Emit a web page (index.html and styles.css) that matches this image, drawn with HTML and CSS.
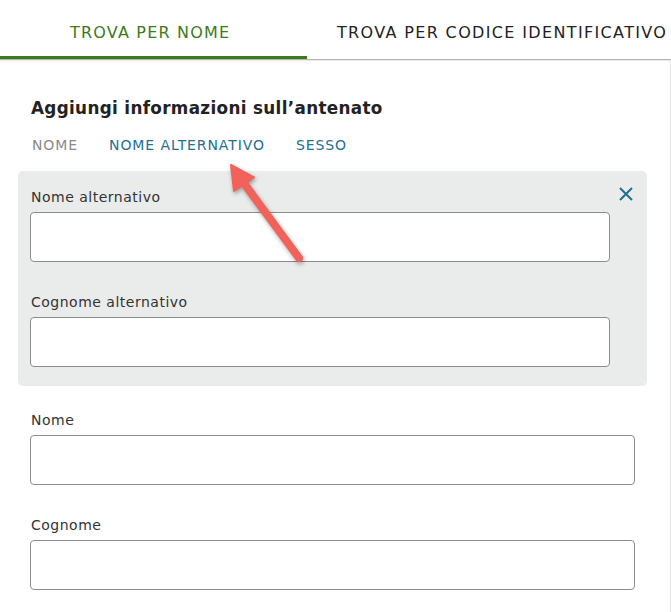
FILE: index.html
```html
<!DOCTYPE html>
<html lang="it">
<head>
<meta charset="utf-8">
<title>Trova antenato</title>
<link rel="stylesheet" href="styles.css">
</head>
<body>
<div class="page">
  <nav class="tabs">
    <div class="tab tab-active">TROVA PER NOME</div>
    <div class="tab tab-second">TROVA PER CODICE IDENTIFICATIVO</div>
  </nav>
  <main class="content">
    <h2 class="heading">Aggiungi informazioni sull’antenato</h2>
    <div class="subtabs">
      <span class="subtab subtab-disabled">NOME</span>
      <span class="subtab">NOME ALTERNATIVO</span>
      <span class="subtab">SESSO</span>
    </div>
    <section class="panel">
      <button class="close" aria-label="Chiudi">
        <svg width="14" height="14" viewBox="0 0 14 14"><path d="M1 1 L13 13 M13 1 L1 13" stroke="#1f6f8f" stroke-width="2" fill="none"/></svg>
      </button>
      <div class="field">
        <label class="label">Nome alternativo</label>
        <div class="input"></div>
      </div>
      <div class="field">
        <label class="label">Cognome alternativo</label>
        <div class="input"></div>
      </div>
    </section>
    <section class="fields">
      <div class="field">
        <label class="label">Nome</label>
        <div class="input"></div>
      </div>
      <div class="field">
        <label class="label">Cognome</label>
        <div class="input"></div>
      </div>
    </section>
  </main>
  <svg class="arrow" width="671" height="612" viewBox="0 0 671 612">
    <line x1="299" y1="258" x2="243" y2="182" stroke="#f0625a" stroke-width="8" stroke-linecap="round"/>
    <polygon points="231,165 254,177.5 234,191" fill="#f0625a" stroke="#f0625a" stroke-width="2" stroke-linejoin="round"/>
  </svg>
</div>
</body>
</html>
```
FILE: styles.css
```css
html, body {
  margin: 0;
  padding: 0;
  background: #fff;
}
body {
  font-family: "DejaVu Sans", Verdana, sans-serif;
  color: #333;
}
.page {
  position: relative;
  width: 671px;
  height: 612px;
  overflow: hidden;
}
.tabs {
  display: flex;
  height: 59px;
  border-bottom: 1px solid #b4b4b4;
  box-shadow: 0 1px 1px rgba(0,0,0,0.08);
  white-space: nowrap;
}
.tab {
  position: relative;
  box-sizing: border-box;
  padding-top: 23px;
  line-height: 20px;
  font-size: 16px;
  letter-spacing: 1.2px;
  color: #222;
}
.tab-active {
  width: 307px;
  padding-left: 70px;
  color: #3d7a1d;
}
.tab-active::after {
  content: "";
  position: absolute;
  left: 0;
  right: 0;
  bottom: 0;
  height: 3px;
  background: #3d7a1d;
}
.tab-second {
  padding-left: 30px;
  letter-spacing: 1.35px;
}
.content {
  box-sizing: border-box;
  width: 671px;
  height: 552px;
  padding: 36px 0 0 18px;
  border-right: 1px solid #e4e4e4;
}
.heading {
  margin: 0;
  padding-left: 13px;
  font-size: 16.8px;
  line-height: 24px;
  letter-spacing: 0.34px;
  font-weight: bold;
  color: #222;
}
.subtabs {
  display: flex;
  gap: 31px;
  margin-top: 15px;
  padding-left: 14px;
  line-height: 20px;
  font-size: 14px;
  letter-spacing: 0.9px;
}
.subtab {
  color: #23708f;
}
.subtab-disabled {
  color: #8a8a8a;
}
.panel {
  position: relative;
  box-sizing: border-box;
  width: 629px;
  margin-top: 16px;
  padding: 16px 37px 19px 12px;
  background: #eaebeb;
  border-radius: 5px;
  display: flex;
  flex-direction: column;
  gap: 30px;
}
.close {
  position: absolute;
  top: 16px;
  right: 14px;
  width: 14px;
  height: 14px;
  padding: 0;
  border: 0;
  background: none;
  line-height: 0;
}
.field {
  display: flex;
  flex-direction: column;
}
.label {
  font-size: 14px;
  line-height: 21px;
  letter-spacing: 0.5px;
  margin-bottom: 4px;
  padding-left: 1px;
  color: #333;
}
.input {
  box-sizing: border-box;
  height: 50px;
  background: #fff;
  border: 1px solid #8c8c8c;
  border-radius: 4px;
}
.fields {
  box-sizing: border-box;
  width: 629px;
  padding: 24px 12px 0 12px;
  display: flex;
  flex-direction: column;
  gap: 30px;
}
.arrow {
  position: absolute;
  left: 0;
  top: 0;
  pointer-events: none;
  filter: drop-shadow(1px 2px 2px rgba(0,0,0,0.35));
}
```
